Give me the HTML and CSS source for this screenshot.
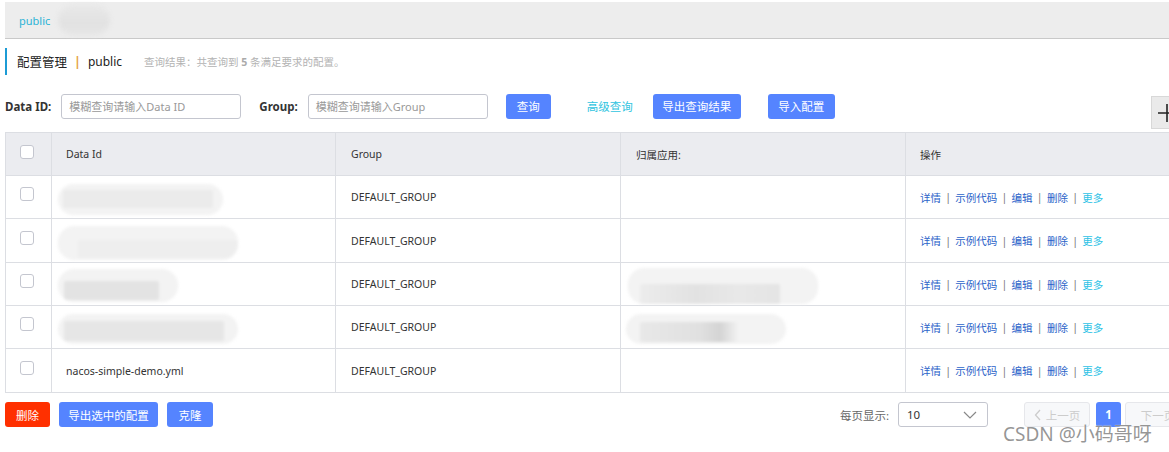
FILE: index.html
```html
<!DOCTYPE html>
<html>
<head>
<meta charset="utf-8">
<link rel="stylesheet" href="styles.css">
</head>
<body>
<div class="page">
  <div class="topbar">
    <span class="tab">public</span>
    <span class="tab-blur"></span>
  </div>

  <div class="title">
    <span class="title-main">配置管理</span>
    <span class="title-sep">|</span>
    <span class="title-ns">public</span>
    <span class="title-info">查询结果：共查询到 <b>5</b> 条满足要求的配置。</span>
  </div>

  <div class="search">
    <label class="lbl">Data ID:</label>
    <div class="input w180">模糊查询请输入Data ID</div>
    <label class="lbl lbl-group">Group:</label>
    <div class="input w180">模糊查询请输入Group</div>
    <button class="btn btn-q">查询</button>
    <a class="adv">高级查询</a>
    <button class="btn btn-export">导出查询结果</button>
    <button class="btn btn-import">导入配置</button>
    <div class="plus-box"><svg width="20" height="20" viewBox="0 0 20 20"><path d="M2 10H20M11 1V19" stroke="#222" stroke-width="1.6" fill="none"/></svg></div>
  </div>

  <div class="table">
    <div class="tr th">
      <div class="td c0"><span class="cb"></span></div>
      <div class="td c1">Data Id</div>
      <div class="td c2">Group</div>
      <div class="td c3">归属应用:</div>
      <div class="td c4">操作</div>
    </div>
    <div class="tr r43">
      <div class="td c0"><span class="cb"></span></div>
      <div class="td c1"><div class="blur b1"><div class="core"></div></div></div>
      <div class="td c2">DEFAULT_GROUP</div>
      <div class="td c3"></div>
      <div class="td c4 ops"><a>详情</a><i>|</i><a>示例代码</a><i>|</i><a>编辑</a><i>|</i><a>删除</a><i>|</i><a class="more">更多</a></div>
    </div>
    <div class="tr r44">
      <div class="td c0"><span class="cb"></span></div>
      <div class="td c1"><div class="blur b2"><div class="core"></div></div></div>
      <div class="td c2">DEFAULT_GROUP</div>
      <div class="td c3"></div>
      <div class="td c4 ops"><a>详情</a><i>|</i><a>示例代码</a><i>|</i><a>编辑</a><i>|</i><a>删除</a><i>|</i><a class="more">更多</a></div>
    </div>
    <div class="tr r43">
      <div class="td c0"><span class="cb"></span></div>
      <div class="td c1"><div class="blur b3"><div class="core"></div></div></div>
      <div class="td c2">DEFAULT_GROUP</div>
      <div class="td c3"><div class="blur b5"><div class="core"></div></div></div>
      <div class="td c4 ops"><a>详情</a><i>|</i><a>示例代码</a><i>|</i><a>编辑</a><i>|</i><a>删除</a><i>|</i><a class="more">更多</a></div>
    </div>
    <div class="tr r43">
      <div class="td c0"><span class="cb"></span></div>
      <div class="td c1"><div class="blur b4"><div class="core"></div></div></div>
      <div class="td c2">DEFAULT_GROUP</div>
      <div class="td c3"><div class="blur b6"><div class="core"></div></div></div>
      <div class="td c4 ops"><a>详情</a><i>|</i><a>示例代码</a><i>|</i><a>编辑</a><i>|</i><a>删除</a><i>|</i><a class="more">更多</a></div>
    </div>
    <div class="tr r44">
      <div class="td c0"><span class="cb"></span></div>
      <div class="td c1">nacos-simple-demo.yml</div>
      <div class="td c2">DEFAULT_GROUP</div>
      <div class="td c3"></div>
      <div class="td c4 ops"><a>详情</a><i>|</i><a>示例代码</a><i>|</i><a>编辑</a><i>|</i><a>删除</a><i>|</i><a class="more">更多</a></div>
    </div>
  </div>

  <div class="footer">
    <div class="left-btns">
      <button class="btn btn-del">删除</button>
      <button class="btn btn-exsel">导出选中的配置</button>
      <button class="btn btn-clone">克隆</button>
    </div>
    <div class="pager">
      <span class="per">每页显示:</span>
      <div class="select"><span>10</span><svg width="14" height="10" viewBox="0 0 14 10"><path d="M1 2L7 8L13 2" stroke="#888" stroke-width="1.2" fill="none"/></svg></div>
      <button class="pg pg-prev"><svg width="8" height="12" viewBox="0 0 8 12"><path d="M6 1L1.5 6L6 11" stroke="#ccc" stroke-width="1.3" fill="none"/></svg>上一页</button>
      <button class="pg pg-cur">1</button>
      <button class="pg pg-next">下一页</button>
    </div>
  </div>
  <div class="watermark">CSDN @小码哥呀</div>
</div>
</body>
</html>
```

FILE: styles.css
```css
html {
  overflow: hidden;
}
html, body {
  margin: 0;
  padding: 0;
  background: #fff;
}
body {
  font-family: "Noto Sans", "Noto Sans CJK SC", sans-serif;
  font-size: 12px;
  color: #333;
  min-height: 452px;
}
.page {
  position: relative;
  width: 1191px;
  height: 452px;
  padding-left: 5px;
  padding-top: 2px;
  box-sizing: border-box;
}
.topbar {
  height: 36px;
  background: #ededed;
  border-bottom: 1px solid #c9c9c9;
  display: flex;
  align-items: center;
  width: 1200px;
}
.tab {
  margin-left: 14px;
  color: #2cb3d6;
  font-size: 11px;
}
.tab-blur {
  margin-left: 8px;
  width: 52px;
  height: 32px;
  border-radius: 18px;
  background: linear-gradient(180deg, #e9e9e9 0%, #e2e2e2 60%, #e7e7e7 100%);
  filter: blur(2px);
}
.title {
  margin-top: 9px;
  height: 27px;
  border-left: 2px solid #1c9bd5;
  display: flex;
  align-items: center;
  padding-left: 10px;
}
.title-main {
  font-size: 12.5px;
  color: #222;
}
.title-sep {
  color: #e3a23d;
  margin: 0 7px 0 7px;
  font-size: 12.5px;
  font-weight: bold;
}
.title-ns {
  font-size: 12px;
  color: #222;
}
.title-info {
  margin-left: 22px;
  font-size: 10.5px;
  color: #b3b3b3;
}
.title-info b {
  font-weight: bold;
  color: #aaa;
}
.search {
  margin-top: 18px;
  height: 26px;
  display: flex;
  align-items: center;
}
.lbl {
  font-weight: bold;
  color: #333;
  font-size: 11.5px;
}
.lbl-group {
  margin-left: 18px;
}
.input {
  margin-left: 10px;
  height: 25px;
  box-sizing: border-box;
  border: 1px solid #c4c6cf;
  border-radius: 3px;
  line-height: 23px;
  padding-left: 7px;
  color: #999;
  font-size: 11px;
}
.w180 { width: 180px; }
.btn {
  height: 25px;
  border: none;
  border-radius: 3px;
  background: #5584ff;
  color: #fff;
  font-family: inherit;
  font-size: 11.5px;
  padding: 0;
}
.btn-q { margin-left: 18px; width: 45px; }
.adv { margin-left: 36px; color: #30c4e0; font-size: 11.5px; }
.btn-export { margin-left: 20px; width: 88px; }
.btn-import { margin-left: 27px; width: 67px; }
.plus-box {
  align-self: flex-start;
  margin-left: 316px;
  margin-top: 3px;
  width: 30px;
  height: 33px;
  background: #eaeaea;
  border: 1px solid #d8d8d8;
  box-sizing: border-box;
  display: flex;
  align-items: center;
  padding-left: 4px;
}
.table {
  margin-top: 13px;
  width: 1200px;
  border-top: 1px solid #dcdee3;
  border-left: 1px solid #dcdee3;
}
.tr {
  display: flex;
  border-bottom: 1px solid #dcdee3;
}
.th { background: #ebecf0; height: 42px; }
.r43 { height: 42px; }
.r44 { height: 43px; }
.td {
  box-sizing: border-box;
  border-right: 1px solid #dcdee3;
  display: flex;
  align-items: center;
  padding-left: 15px;
  font-size: 10.5px;
  color: #333;
}
.c0 { width: 46px; padding-left: 14px; }
.c1 { width: 284px; padding-left: 14px; }
.c2 { width: 285px; }
.c3 { width: 285px; }
.c4 { flex: 1; border-right: none; padding-left: 14px; }
.cb {
  width: 14px;
  height: 14px;
  box-sizing: border-box;
  border: 1px solid #c4c6cf;
  border-radius: 3px;
  background: #fff;
  margin-top: -6px;
}
.th .cb { margin-top: -4px; }
.ops a { color: #2a62c9; }
.ops a.more { color: #2ec2e6; }
.ops i { font-style: normal; color: #777; margin: 0 4.25px; }
.blur {
  position: relative;
  border-radius: 16px;
  background: #f3f3f3;
  filter: blur(1.5px);
  overflow: hidden;
}
.core {
  position: absolute;
  background: linear-gradient(90deg, #ececec, #e2e2e2 40%, #e8e8e8 70%, #e4e4e4);
  border-radius: 2px;
}
.b1 { width: 165px; height: 31px; margin-left: -8px; margin-top: 4px; }
.b1 .core { left: 5px; top: 6px; width: 150px; height: 18px; background: #ebebeb; }
.b2 { width: 180px; height: 34px; margin-left: -8px; margin-top: 4px; }
.b2 .core { left: 20px; top: 14px; width: 160px; height: 18px; background: #eeeeee; }
.b3 { width: 120px; height: 33px; margin-left: -8px; margin-top: 2px; }
.b3 .core { left: 6px; top: 12px; width: 95px; height: 19px; background: #e3e3e3; }
.b4 { width: 180px; height: 30px; margin-left: -8px; margin-top: 4px; }
.b4 .core { left: 6px; top: 7px; width: 160px; height: 20px; background: #e6e6e6; }
.b5 { width: 190px; height: 36px; margin-left: -8px; margin-top: 4px; }
.b5 .core { left: 12px; top: 16px; width: 140px; height: 20px; }
.b6 { width: 160px; height: 30px; margin-left: -10px; margin-top: 4px; }
.b6 .core { left: 14px; top: 8px; width: 100px; height: 20px; background: linear-gradient(90deg, #e8e8e8, #e0e0e0 60%, #d4d4d4 80%, #f5f5f5); }
.footer {
  margin-top: 9px;
  display: flex;
  align-items: center;
}
.left-btns { display: flex; }
.btn-del { width: 45px; background: #ff3000; }
.btn-exsel { margin-left: 9px; width: 99px; }
.btn-clone { margin-left: 9px; width: 46px; }
.pager {
  margin-left: auto;
  display: flex;
  align-items: center;
}
.per { color: #666; font-size: 11.5px; }
.select {
  margin-left: 9px;
  width: 90px;
  height: 25px;
  box-sizing: border-box;
  border: 1px solid #c4c6cf;
  border-radius: 3px;
  display: flex;
  align-items: center;
  justify-content: space-between;
  padding: 0 10px 0 8px;
  color: #333;
  font-size: 11.5px;
}
.pg {
  height: 25px;
  box-sizing: border-box;
  border-radius: 3px;
  font-family: inherit;
  font-size: 11.5px;
  padding: 0;
}
.pg-prev, .pg-next {
  width: 66px;
  background: #f7f8fa;
  border: 1px solid #e6e7eb;
  color: #ccc;
  display: flex;
  align-items: center;
  justify-content: center;
  gap: 4px;
}
.pg-prev { margin-left: 36px; }
.pg-cur {
  margin-left: 6px;
  width: 25px;
  background: #5584ff;
  border: none;
  color: #fff;
  font-weight: bold;
}
.pg-next { margin-left: 4px; }
.watermark {
  position: absolute;
  left: 1003px;
  top: 419px;
  font-size: 19px;
  color: rgba(115, 115, 115, 0.75);
  font-family: "Noto Sans", "Noto Sans CJK SC", sans-serif;
  white-space: nowrap;
  text-shadow: 0 0 1px #fff;
}
```
